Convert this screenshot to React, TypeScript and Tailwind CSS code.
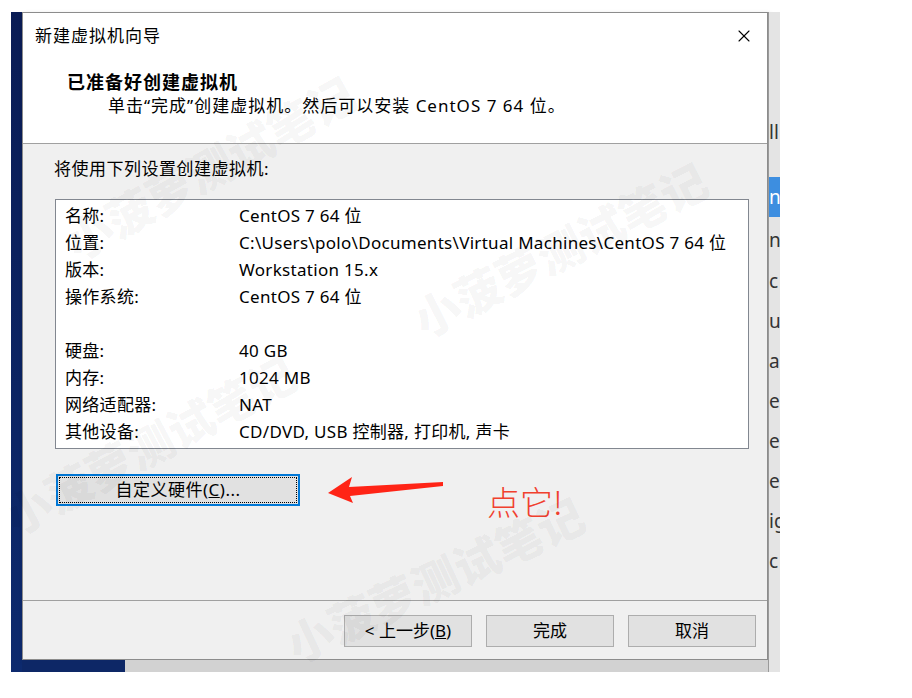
import { X } from "lucide-react";

const rows: [string, string][] = [
  ["名称:", "CentOS 7 64 位"],
  ["位置:", "C:\\Users\\polo\\Documents\\Virtual Machines\\CentOS 7 64 位"],
  ["版本:", "Workstation 15.x"],
  ["操作系统:", "CentOS 7 64 位"],
  ["", ""],
  ["硬盘:", "40 GB"],
  ["内存:", "1024 MB"],
  ["网络适配器:", "NAT"],
  ["其他设备:", "CD/DVD, USB 控制器, 打印机, 声卡"],
];

const sideLetters = ["n", "c", "u", "a", "e", "e", "e", "ig", "c"];

function Watermark({ className }: { className: string }) {
  return (
    <span
      aria-hidden
      className={`pointer-events-none absolute -translate-x-1/2 -translate-y-1/2 whitespace-nowrap text-[46px] font-black leading-none text-black/[0.055] ${className}`}
    >
      小菠萝测试笔记
    </span>
  );
}

function WinButton({ children }: { children: React.ReactNode }) {
  return (
    <button className="flex h-[32px] w-[128px] items-center justify-center border border-[#adadad] bg-[#e1e1e1] text-[17px] text-black">
      {children}
    </button>
  );
}

export default function App() {
  return (
    <div
      className="relative h-[698px] w-[912px] overflow-hidden bg-white text-black"
      style={{ fontFamily: '"Noto Sans", "Noto Sans CJK SC", sans-serif' }}
    >
      <div className="pl-[11px] pt-[12px]">
        <div className="grid h-[660px] w-[769px] grid-cols-[11px_746px_12px] grid-rows-[648px_12px]">
          {/* desktop behind the wizard */}
          <div className="row-span-2 bg-gradient-to-b from-[#0a1c55] to-[#0d2a6e]" />

          {/* wizard window */}
          <div className="flex flex-col border border-[#8c8c8c] bg-[#f0f0f0] shadow-[2px_2px_4px_rgba(0,0,0,0.25)]">
            <div className="h-[131px] border-b border-[#a0a0a0] bg-white px-[12px]">
              <div className="flex h-[46px] items-center justify-between">
                <span className="text-[17px] tracking-[1px]">新建虚拟机向导</span>
                <X className="mr-[1px] h-[20px] w-[20px]" strokeWidth={1.3} />
              </div>
              <div className="mt-[11px] pl-[32px] text-[18px] font-bold leading-[24px] tracking-[1px]">
                已准备好创建虚拟机
              </div>
              <div className="pl-[73px] text-[17px] leading-[24px] tracking-[1px]">
                单击“完成”创建虚拟机。然后可以安装 CentOS 7 64 位。
              </div>
            </div>

            <div className="h-[456px] pl-[31px] pt-[13px]">
              <div className="text-[17px] leading-[24px] tracking-[0.5px]">将使用下列设置创建虚拟机:</div>
              <div className="ml-[1px] mt-[18px] h-[250px] w-[694px] border border-[#828790] bg-white pl-[9px] pt-[2px]">
                {rows.map(([label, value], i) => (
                  <div key={i} className="flex h-[27px] items-center text-[17px] tracking-[0.3px]">
                    <span className="w-[174px] shrink-0">{label}</span>
                    <span className="whitespace-nowrap">{value}</span>
                  </div>
                ))}
              </div>
              <button className="ml-[2px] mt-[25px] flex h-[32px] w-[244px] border-2 border-[#0078d7] bg-[#e1e1e1] p-[1px]">
                <span className="flex h-full w-full items-center justify-center border border-dotted border-black text-[17px] tracking-[0.5px]">
                  自定义硬件(<span className="underline">C</span>)...
                </span>
              </button>
            </div>

            <div className="flex h-[59px] justify-end gap-[14px] border-t border-[#a0a0a0] pr-[11px] pt-[14px]">
              <WinButton>
                &lt; 上一步(<span className="underline">B</span>)
              </WinButton>
              <WinButton>完成</WinButton>
              <WinButton>取消</WinButton>
            </div>
          </div>

          {/* list behind, right edge */}
          <div className="row-span-2 overflow-hidden border-l border-[#9a9a9a] bg-[#e4e4e4] text-[19px] leading-none text-[#333]">
            <div className="h-[100px]" />
            <div className="flex h-[40px] items-center">ll</div>
            <div className="h-[25px]" />
            <div className="flex h-[40px] items-center bg-[#3d8ee0] text-white">n</div>
            <div className="flex h-[40px] items-center pt-[6px]">n</div>
            {sideLetters.slice(1).map((l, i) => (
              <div key={i} className="flex h-[40px] items-center pt-[8px]">
                {l}
              </div>
            ))}
          </div>

          <div className="flex">
            <div className="w-[103px] bg-[#0d2766]" />
            <div className="flex-1 bg-[#d2d2d2]" />
          </div>
        </div>
      </div>

      {/* annotation */}
      <svg className="absolute left-[320px] top-[470px] h-[40px] w-[130px]" viewBox="0 0 130 40">
        <polygon points="8,23 32,7 29,17 123,12 123,16 30,26 33,33" fill="#ff2416" />
      </svg>
      <span
        className="absolute left-[487px] top-[485px] text-[33px] font-light leading-none text-[#f0402e]"
        style={{ fontFamily: '"Noto Sans CJK SC", sans-serif' }}
      >
        点它!
      </span>

      {/* watermarks */}
      <Watermark className="left-[210px] top-[168px] -rotate-[29deg]" />
      <Watermark className="left-[560px] top-[250px] -rotate-[27deg]" />
      <Watermark className="left-[150px] top-[445px] -rotate-[28deg]" />
      <Watermark className="left-[435px] top-[580px] -rotate-[25deg]" />
    </div>
  );
}
